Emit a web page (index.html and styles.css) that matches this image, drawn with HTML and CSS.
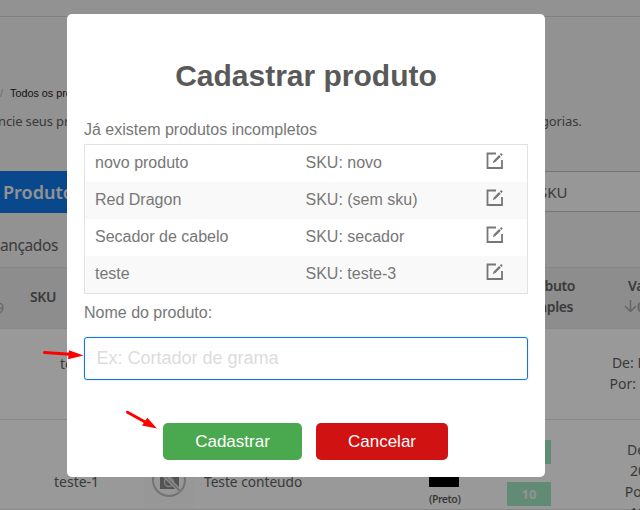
FILE: index.html
```html
<!DOCTYPE html>
<html lang="pt-BR">
<head>
<meta charset="utf-8">
<title>Cadastrar produto</title>
<link rel="stylesheet" href="styles.css">
</head>
<body>
<svg class="defs" width="0" height="0">
  <symbol id="edit" viewBox="0 0 18 18">
    <path d="M10 1.500H1.500V16H16V8" fill="none" stroke="currentColor" stroke-width="1.800"/>
    <path d="M6.800 11.200l.9-2.800 5.400-5.400 1.700 1.700-5.400 5.400zM13.800 2.300l1.300-1.300 1.700 1.700-1.300 1.300z" fill="currentColor"/>
  </symbol>
</svg>
<div class="page">
  <div class="topbar"></div>
  <div class="crumbs"><span class="sep">/</span>Todos os produtos</div>
  <div class="intro"><span class="intro-start">ncie seus pro</span><span>gorias.</span></div>
  <div class="toolbar"><div class="new">Produto</div><div class="search">SKU</div></div>
  <div class="filters">ançados</div>
  <div class="row head">
    <div class="sort">9</div>
    <div class="head-sku">SKU</div>
    <div class="head-attr">Atributo<br>Simples</div>
    <div class="head-price">Va<br><span class="arrow"><svg width="13" height="13" viewBox="0 0 13 13"><path d="M6.500 0V11.500M1 6l5.500 5.500L12 6" fill="none" stroke="currentColor" stroke-width="1.500"/></svg>0</span></div>
  </div>
  <div class="row first">
    <div class="sku">teste</div>
    <div class="price">De: R$<br>Por: R$</div>
  </div>
  <div class="row second">
    <div class="sku">teste-1</div>
    <div class="thumb"><svg width="36" height="36" viewBox="0 0 36 36"><path d="M9 11h4l2-2h7l2 2h4v13H9z" fill="#8c8c8c"/><circle cx="18" cy="17" r="4.500" fill="none" stroke="#d8d8d8" stroke-width="1.500"/><circle cx="18" cy="15" r="16" fill="none" stroke="#c0c0c0" stroke-width="2"/><path d="M7 4l22 22" stroke="#eee" stroke-width="4"/><path d="M7 4l22 22" stroke="#c0c0c0" stroke-width="1.800"/></svg></div>
    <div class="name">Teste conteudo</div>
    <div class="color"><div class="swatch"></div>(Preto)</div>
    <div class="stock"><div class="badge">10</div><div class="badge">10</div></div>
    <div class="price">De:<br>20<br>Por:<br>19</div>
  </div>
</div>
<div class="overlay">
  <div class="modal">
    <h1>Cadastrar produto</h1>
    <p class="label">Já existem produtos incompletos</p>
    <div class="list">
      <div class="item"><span>novo produto</span><span>SKU: novo</span><svg><use href="#edit"/></svg></div>
      <div class="item"><span>Red Dragon</span><span>SKU: (sem sku)</span><svg><use href="#edit"/></svg></div>
      <div class="item"><span>Secador de cabelo</span><span>SKU: secador</span><svg><use href="#edit"/></svg></div>
      <div class="item"><span>teste</span><span>SKU: teste-3</span><svg><use href="#edit"/></svg></div>
    </div>
    <p class="label">Nome do produto:</p>
    <input class="field" type="text" placeholder="Ex: Cortador de grama">
    <div class="actions"><button class="save">Cadastrar</button><button class="cancel">Cancelar</button></div>
  </div>
</div>
<svg class="marks" width="640" height="510" viewBox="0 0 640 510">
  <g stroke="#f00" stroke-width="3" stroke-linecap="round"><path d="M44.500 352.500L70 354.300M127.500 412.300L146 422.500"/></g>
  <path d="M83.500 355.500L68 359.300L69 350.200zM157 428.500L142 425.500L147.300 417.800z" fill="#f00"/>
</svg>
</body>
</html>
```

FILE: styles.css
```css
* { box-sizing: border-box; }
body { margin: 0; width: 640px; height: 510px; overflow: hidden; position: relative; }
.defs { position: absolute; }
.page {
  height: 510px;
  overflow: hidden;
  background: #f4f4f4;
  color: #626262;
  font: 14px/21px "Noto Sans", sans-serif;
  white-space: nowrap;
}
.topbar { height: 17px; border-bottom: 1px solid #d5d5d5; }
.crumbs { height: 22px; margin-top: 65px; font: 10.8px/22px "Liberation Sans", sans-serif; color: #222; }
.sep { display: inline-block; width: 10px; color: #bbb; }
.intro { display: flex; height: 20px; margin-top: 7px; font-size: 13px; line-height: 20px; letter-spacing: -0.15px; }
.intro-start { width: 543px; margin-left: -2px; }
.toolbar { display: flex; height: 42px; margin-top: 40px; }
.new {
  width: 300px;
  padding-left: 3px;
  background: #1078e8;
  color: #f4f4f4;
  font: 600 18px/42px "Noto Sans", sans-serif;
}
.search {
  width: 340px;
  height: 41px;
  padding-left: 239px;
  border: solid #c4c4c4;
  border-width: 1px 0;
  background: #fcfcfc;
  font-size: 15px;
  line-height: 41px;
}
.filters { height: 54px; padding-top: 20px; font-size: 15.5px; line-height: 24px; letter-spacing: -0.4px; }
.row { display: flex; border-bottom: 1px solid #e3e3e3; background: #fff; }
.row > * { flex-shrink: 0; }
.head {
  height: 62px;
  border-top: 1px solid #dfdfdf;
  background: #ebebeb;
  font-size: 14px;
  font-weight: 600;
  letter-spacing: -0.4px;
  padding-top: 8px;
}
.sort { width: 30px; margin-left: -4px; padding-top: 21px; font-weight: 400; color: #aaa; }
.head-sku { width: 484px; padding: 10px 0 0 4px; }
.head-attr { width: 76px; margin-top: -1px; text-align: center; }
.head-price { margin-top: -1px; padding-left: 42px; }
.arrow { display: flex; align-items: center; margin-left: -4px; color: #aaa; }
.first { height: 91px; padding-top: 24px; }
.first .sku { width: 603px; padding-left: 60px; }
.first .price { width: 60px; margin-top: -1px; text-align: center; }
.second { height: 90px; }
.second .sku { width: 144px; padding: 51px 0 0 54px; }
.thumb { width: 50px; height: 50px; margin-top: 38px; padding: 7px; background: #fcfcfc; }
.name { width: 235px; padding: 51px 0 0 10px; font-size: 13.7px; }
.color { width: 30px; padding-top: 37px; font-size: 10.5px; font-weight: 600; line-height: 24px; letter-spacing: -0.45px; }
.swatch { width: 30px; height: 30px; background: #000; }
.stock { width: 92px; padding: 20px 0 0 48px; }
.badge { width: 44px; height: 24px; margin-bottom: 18px; background: #a2e8c2; color: #f4f4f4; text-align: center; font-size: 13px; font-weight: 700; line-height: 24px; }
.second .price { width: 40px; margin-left: 67px; padding-top: 19px; text-align: center; }
.overlay { position: absolute; inset: 0; padding: 14px 0 0 67px; background: rgba(0, 0, 0, .4); }
.modal {
  width: 478px;
  height: 463px;
  padding: 42px 17px 0;
  border-radius: 5px;
  background: #fff;
  color: #777;
  font: 16px/22px "Liberation Sans", sans-serif;
}
h1 { margin: 0 0 23px; color: #595959; font-size: 30px; line-height: 40px; text-align: center; }
p { margin: 0; }
.label { height: 25px; }
.list { height: 150px; margin-bottom: 8px; border: 1px solid #e2e2e2; }
.item { display: grid; grid-template-columns: 210.5px 180.5px 18px; height: 37px; padding: 0 0 1px 10px; align-items: center; }
.item:nth-child(even) { background: #f9f9f9; }
.item svg { width: 18px; height: 18px; margin-top: -4px; }
.field {
  display: block;
  width: 444px;
  height: 43px;
  margin: 10px 0 0;
  padding: 0 11.5px;
  border: 1px solid #1672e2;
  border-radius: 3px;
  outline: 0;
  box-shadow: 0 0 2px rgba(22, 114, 226, .3);
  font: 18px "Liberation Sans", sans-serif;
}
.field::placeholder { color: #dcdcdc; }
.actions { display: flex; gap: 14px; margin: 43px 0 0 79px; }
button { height: 37px; padding: 0; border: 0; border-radius: 5px; color: #fff; font: 17px "Liberation Sans", sans-serif; }
.save { width: 139px; background: #4aa84f; }
.cancel { width: 132px; background: #d01212; }
.marks { position: absolute; inset: 0; }
```
